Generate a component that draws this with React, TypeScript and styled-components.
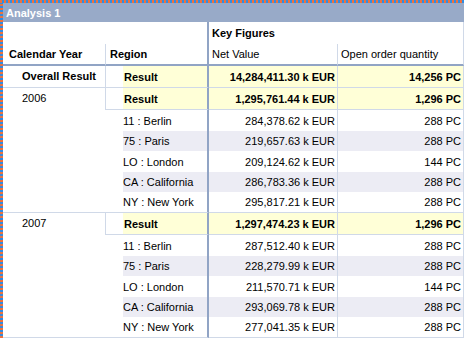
import React from "react";
import styled, { createGlobalStyle, css } from "styled-components";

const GlobalStyle = createGlobalStyle`
  html, body {
    margin: 0;
    padding: 0;
    background: #fff;
    overflow: hidden;
  }
  body {
    font-family: Tahoma, "Liberation Sans", Arial, sans-serif;
    font-size: 11px;
    color: #000;
  }
`;

const LIGHT_LINE = "#d0d9e8";
const THICK_LINE = "#91a4c5";
const RESULT_BG = "#ffffd7";
const SHADE_BG = "#ececf4";

const StyledFrame = styled.div`
  width: 464px;
  padding: 3px 0 0 3px;
  box-sizing: border-box;
  background:
    repeating-linear-gradient(90deg, #f0713a 0 2px, #2f8de4 2px 4px) top left / 100% 3px no-repeat,
    repeating-linear-gradient(180deg, #f0713a 0 2px, #2f8de4 2px 4px) top left / 3px 100% no-repeat,
    #fff;
`;

const StyledTitleBar = styled.div`
  height: 19px;
  padding-left: 3px;
  background: #98aac8;
  color: #fff;
  font-weight: bold;
  line-height: 20px;
`;

const StyledTable = styled.table`
  table-layout: fixed;
  border-collapse: separate;
  border-spacing: 0;
  width: 461px;

  td, th {
    box-sizing: border-box;
    padding: 0;
    white-space: nowrap;
    overflow: hidden;
  }
`;

const StyledHeadRow = styled.tr<{ $h: number }>`
  height: ${({ $h }) => $h}px;
`;

type Divider = "none" | "light" | "thick";

const StyledHeadCell = styled.th<{
  $pad: number;
  $right?: Divider;
  $left?: boolean;
  $bottom?: boolean;
  $bold?: boolean;
}>`
  text-align: left;
  vertical-align: middle;
  padding-left: ${({ $pad }) => $pad}px !important;
  font-weight: ${({ $bold }) => ($bold ? "bold" : "normal")};
  ${({ $right }) =>
    $right === "thick"
      ? css`border-right: 2px solid ${THICK_LINE};`
      : $right === "light"
      ? css`border-right: 1px solid ${LIGHT_LINE};`
      : ""}
  ${({ $left }) => $left && css`border-left: 1px solid ${LIGHT_LINE};`}
  ${({ $bottom }) => $bottom && css`border-bottom: 2px solid ${THICK_LINE};`}
`;

type RowKind = "overall" | "result" | "member";

const StyledBodyRow = styled.tr<{ $h: number }>`
  height: ${({ $h }) => $h}px;
`;

const StyledYearCell = styled.td<{ $bold?: boolean }>`
  vertical-align: top;
  padding-left: 19px !important;
  line-height: 21px;
  font-weight: ${({ $bold }) => ($bold ? "bold" : "normal")};
  border-bottom: 1px solid ${LIGHT_LINE};
`;

const StyledRegionCell = styled.td<{ $kind: RowKind; $bg: string; $last?: boolean }>`
  vertical-align: middle;
  border-right: 2px solid ${THICK_LINE};
  ${({ $kind, $bg }) =>
    $kind === "member"
      ? css`
          padding-left: 18px !important;
          background: linear-gradient(90deg, #fff 0 18px, ${$bg} 18px);
        `
      : css`
          padding-left: 18px !important;
          font-weight: bold;
          border-left: 1px solid ${LIGHT_LINE};
          border-bottom: 1px solid ${LIGHT_LINE};
          background: linear-gradient(90deg, #fff 0 17px, ${$bg} 17px);
        `}
  ${({ $last }) => $last && css`border-bottom: 1px solid ${LIGHT_LINE};`}
`;

const StyledValueCell = styled.td<{ $bold?: boolean; $bg: string; $line?: boolean }>`
  text-align: right;
  vertical-align: middle;
  padding-right: 2px !important;
  background: ${({ $bg }) => $bg};
  font-weight: ${({ $bold }) => ($bold ? "bold" : "normal")};
  border-right: 1px solid ${LIGHT_LINE};
  ${({ $line }) => $line && css`border-bottom: 1px solid ${LIGHT_LINE};`}
`;

interface Member {
  region: string;
  value: string;
  qty: string;
}

interface YearGroup {
  year: string;
  value: string;
  qty: string;
  members: Member[];
}

const groups: YearGroup[] = [
  {
    year: "2006",
    value: "1,295,761.44 k EUR",
    qty: "1,296 PC",
    members: [
      { region: "11 : Berlin", value: "284,378.62 k EUR", qty: "288 PC" },
      { region: "75 : Paris", value: "219,657.63 k EUR", qty: "288 PC" },
      { region: "LO : London", value: "209,124.62 k EUR", qty: "144 PC" },
      { region: "CA : California", value: "286,783.36 k EUR", qty: "288 PC" },
      { region: "NY : New York", value: "295,817.21 k EUR", qty: "288 PC" },
    ],
  },
  {
    year: "2007",
    value: "1,297,474.23 k EUR",
    qty: "1,296 PC",
    members: [
      { region: "11 : Berlin", value: "287,512.40 k EUR", qty: "288 PC" },
      { region: "75 : Paris", value: "228,279.99 k EUR", qty: "288 PC" },
      { region: "LO : London", value: "211,570.71 k EUR", qty: "144 PC" },
      { region: "CA : California", value: "293,069.78 k EUR", qty: "288 PC" },
      { region: "NY : New York", value: "277,041.35 k EUR", qty: "288 PC" },
    ],
  },
];

const memberHeights = [21, 20, 21, 20, 21];

const renderGroup = (group: YearGroup) => {
  const rows = [
    <StyledBodyRow key={group.year + "-result"} $h={22}>
      <StyledYearCell rowSpan={group.members.length + 1}>{group.year}</StyledYearCell>
      <StyledRegionCell $kind="result" $bg={RESULT_BG}>Result</StyledRegionCell>
      <StyledValueCell $bold $bg={RESULT_BG} $line>{group.value}</StyledValueCell>
      <StyledValueCell $bold $bg={RESULT_BG} $line>{group.qty}</StyledValueCell>
    </StyledBodyRow>,
  ];

  group.members.forEach((member, index) => {
    const bg = index % 2 === 1 ? SHADE_BG : "#fff";
    const last = index === group.members.length - 1;
    rows.push(
      <StyledBodyRow key={group.year + member.region} $h={memberHeights[index]}>
        <StyledRegionCell $kind="member" $bg={bg} $last={last}>{member.region}</StyledRegionCell>
        <StyledValueCell $bg={bg} $line={last}>{member.value}</StyledValueCell>
        <StyledValueCell $bg={bg} $line={last}>{member.qty}</StyledValueCell>
      </StyledBodyRow>
    );
  });

  return rows;
};

const App: React.FC = () => {
  return (
    <>
      <GlobalStyle />
      <StyledFrame>
        <StyledTitleBar>Analysis 1</StyledTitleBar>
        <StyledTable>
          <colgroup>
            <col style={{ width: 102 }} />
            <col style={{ width: 104 }} />
            <col style={{ width: 129 }} />
            <col style={{ width: 126 }} />
          </colgroup>
          <thead>
            <StyledHeadRow $h={22}>
              <StyledHeadCell colSpan={2} $pad={0} $right="thick" />
              <StyledHeadCell colSpan={2} $pad={3} $right="light" $bold>
                Key Figures
              </StyledHeadCell>
            </StyledHeadRow>
            <StyledHeadRow $h={22}>
              <StyledHeadCell $pad={6} $bottom $bold>Calendar Year</StyledHeadCell>
              <StyledHeadCell $pad={4} $left $right="thick" $bottom $bold>Region</StyledHeadCell>
              <StyledHeadCell $pad={3} $right="light" $bottom>Net Value</StyledHeadCell>
              <StyledHeadCell $pad={3} $right="light" $bottom>Open order quantity</StyledHeadCell>
            </StyledHeadRow>
          </thead>
          <tbody>
            <StyledBodyRow $h={21}>
              <StyledYearCell $bold>Overall Result</StyledYearCell>
              <StyledRegionCell $kind="overall" $bg={RESULT_BG}>Result</StyledRegionCell>
              <StyledValueCell $bold $bg={RESULT_BG} $line>14,284,411.30 k EUR</StyledValueCell>
              <StyledValueCell $bold $bg={RESULT_BG} $line>14,256 PC</StyledValueCell>
            </StyledBodyRow>
            {groups.map(renderGroup)}
          </tbody>
        </StyledTable>
      </StyledFrame>
    </>
  );
};

export default App;
